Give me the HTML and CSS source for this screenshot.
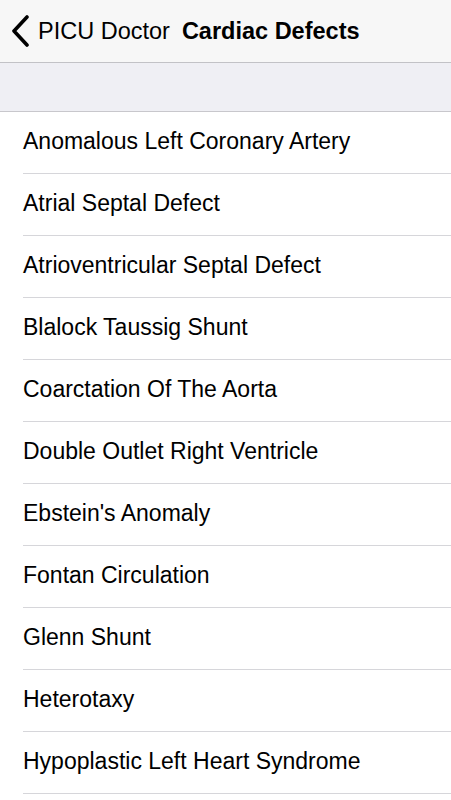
FILE: index.html
```html
<!DOCTYPE html>
<html>
<head>
<meta charset="utf-8">
<link rel="stylesheet" href="styles.css">
</head>
<body>
<div class="nav">
  <svg class="chev" width="20" height="32" viewBox="0 0 20 32"><path d="M17 2 L4 16 L17 30" fill="none" stroke="#000" stroke-width="3.6" stroke-linecap="round" stroke-linejoin="round"/></svg>
  <span class="back">PICU Doctor</span>
  <span class="title">Cardiac Defects</span>
</div>
<div class="band"></div>
<ul class="list">
  <li>Anomalous Left Coronary Artery</li>
  <li>Atrial Septal Defect</li>
  <li>Atrioventricular Septal Defect</li>
  <li>Blalock Taussig Shunt</li>
  <li>Coarctation Of The Aorta</li>
  <li>Double Outlet Right Ventricle</li>
  <li>Ebstein's Anomaly</li>
  <li>Fontan Circulation</li>
  <li>Glenn Shunt</li>
  <li>Heterotaxy</li>
  <li>Hypoplastic Left Heart Syndrome</li>
</ul>
</body>
</html>
```
FILE: styles.css
```css
html, body { margin: 0; padding: 0; }
body {
  width: 451px;
  height: 800px;
  overflow: hidden;
  background: #fff;
  font-family: "Liberation Sans", Arial, sans-serif;
  color: #000;
}
.nav {
  height: 62px;
  background: #f7f7f7;
  border-bottom: 1px solid #c2c2c6;
  display: flex;
  align-items: center;
}
.chev { margin-left: 10px; margin-right: 8px; flex: none; }
.back { font-size: 23.5px; }
.title { font-size: 23.5px; font-weight: bold; margin-left: 12px; }
.band {
  height: 48px;
  background: #efeff4;
  border-bottom: 1px solid #c8c7cc;
}
.list { list-style: none; margin: 0; padding: 0 0 0 23px; }
.list li {
  height: 61px;
  padding-bottom: 2px;
  box-sizing: border-box;
  height: 62px;
  border-bottom: 1px solid #d6d6da;
  display: flex;
  align-items: center;
  font-size: 23px;
}
```
